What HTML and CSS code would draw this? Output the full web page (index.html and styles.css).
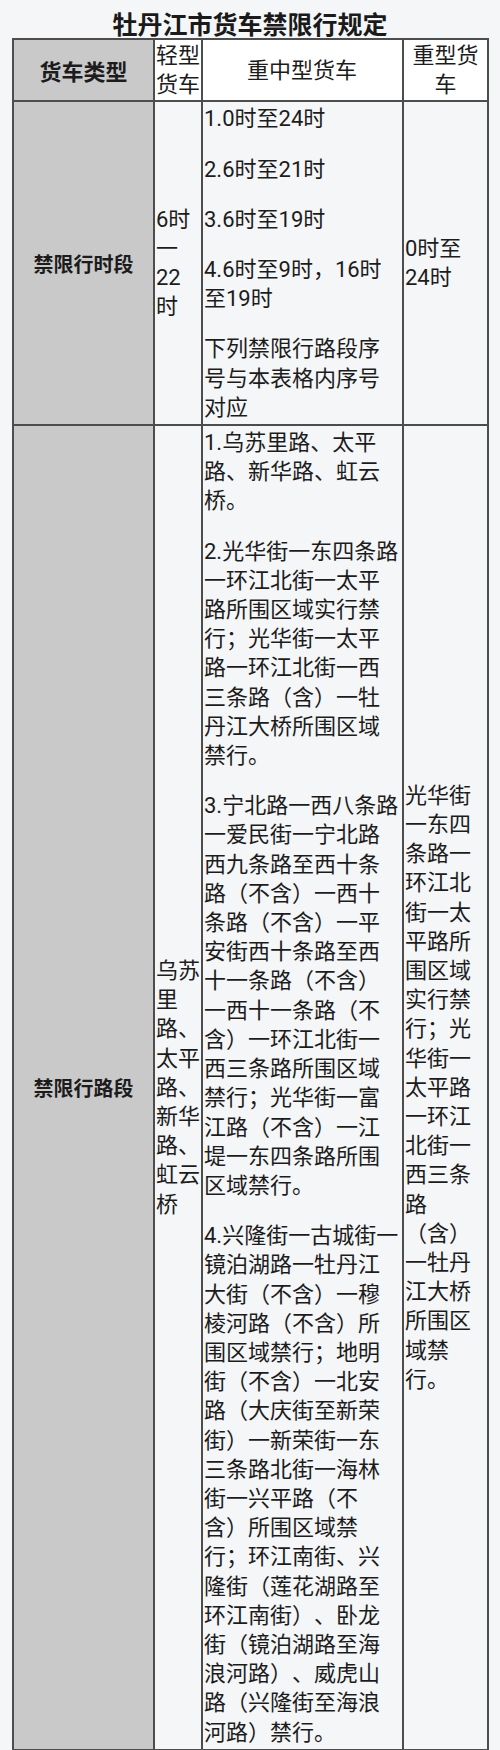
FILE: index.html
```html
<!DOCTYPE html>
<html lang="zh-CN">
<head>
<meta charset="utf-8">
<title>牡丹江市货车禁限行规定</title>
<link rel="stylesheet" href="styles.css">
</head>
<body>
<h1 class="title">牡丹江市货车禁限行规定</h1>
<table class="rules">
  <thead>
    <tr>
      <th class="c1 label-head">货车类型</th>
      <th class="c2">轻型货车</th>
      <th class="c3">重中型货车</th>
      <th class="c4">重型货车</th>
    </tr>
  </thead>
  <tbody>
    <tr>
      <td class="c1 label">禁限行时段</td>
      <td class="c2">6时一22时</td>
      <td class="c3">
        <p>1.0时至24时</p>
        <p>2.6时至21时</p>
        <p>3.6时至19时</p>
        <p>4.6时至9时，16时至19时</p>
        <p>下列禁限行路段序号与本表格内序号对应</p>
      </td>
      <td class="c4">0时至24时</td>
    </tr>
    <tr>
      <td class="c1 label">禁限行路段</td>
      <td class="c2">乌苏里路、太平路、新华路、虹云桥</td>
      <td class="c3">
        <p>1.乌苏里路、太平路、新华路、虹云桥。</p>
        <p>2.光华街一东四条路一环江北街一太平路所围区域实行禁行；光华街一太平路一环江北街一西三条路（含）一牡丹江大桥所围区域禁行。</p>
        <p>3.宁北路一西八条路一爱民街一宁北路西九条路至西十条路（不含）一西十条路（不含）一平安街西十条路至西十一条路（不含）一西十一条路（不含）一环江北街一西三条路所围区域禁行；光华街一富江路（不含）一江堤一东四条路所围区域禁行。</p>
        <p>4.兴隆街一古城街一镜泊湖路一牡丹江大街（不含）一穆棱河路（不含）所围区域禁行；地明街（不含）一北安路（大庆街至新荣街）一新荣街一东三条路北街一海林街一兴平路（不含）所围区域禁行；环江南街、兴隆街（莲花湖路至环江南街）、卧龙街（镜泊湖路至海浪河路）、威虎山路（兴隆街至海浪河路）禁行。</p>
      </td>
      <td class="c4">光华街一东四条路一环江北街一太平路所围区域实行禁行；光华街一太平路一环江北街一西三条路（含）一牡丹江大桥所围区域禁行。</td>
    </tr>
  </tbody>
</table>
</body>
</html>
```

FILE: styles.css
```css
html, body {
  margin: 0;
  padding: 0;
  background: #f4f6f7;
}

body {
  font-family: Roboto, "Noto Sans CJK SC", sans-serif;
  color: #1c1c1c;
  text-spacing-trim: space-all;
}

.title {
  margin: 0;
  padding-top: 8px;
  height: 30px;
  font-family: "Noto Sans CJK SC", sans-serif;
  font-size: 25px;
  line-height: 30px;
  font-weight: 700;
  text-align: center;
  color: #1a1a1a;
}

.rules {
  margin-left: 12px;
  border-collapse: separate;
  border-spacing: 0;
  table-layout: fixed;
  width: 477px;
  border-left: 2px solid #4d4d4d;
  border-top: 2px solid #4d4d4d;
}

.rules th,
.rules td {
  box-sizing: border-box;
  border-right: 2px solid #4d4d4d;
  border-bottom: 2px solid #4d4d4d;
  font-size: 22px;
  line-height: 29.2px;
  font-weight: 400;
  vertical-align: middle;
  text-align: left;
  padding: 1px;
  background: #f4f6f7;
}

.rules th {
  background: #ffffff;
  text-align: center;
}

.rules .c1 {
  width: 141px;
  background: #c9c9c9;
  text-align: center;
  font-family: "Noto Sans CJK SC", sans-serif;
}

.rules .c2 {
  width: 48px;
}

.rules .c3 {
  width: 201px;
  padding: 2px 2px 2px 1px;
}

.rules .c4 {
  width: 85px;
  padding-right: 8px;
}

.rules th.c4 {
  padding-left: 4px;
  padding-right: 4px;
}

.rules .label-head {
  font-weight: 700;
  font-size: 22px;
}

.rules .label {
  font-weight: 700;
  font-size: 20px;
}

.rules p {
  margin: 0 0 21px 0;
}

.rules p:last-child {
  margin-bottom: 0;
}
```
